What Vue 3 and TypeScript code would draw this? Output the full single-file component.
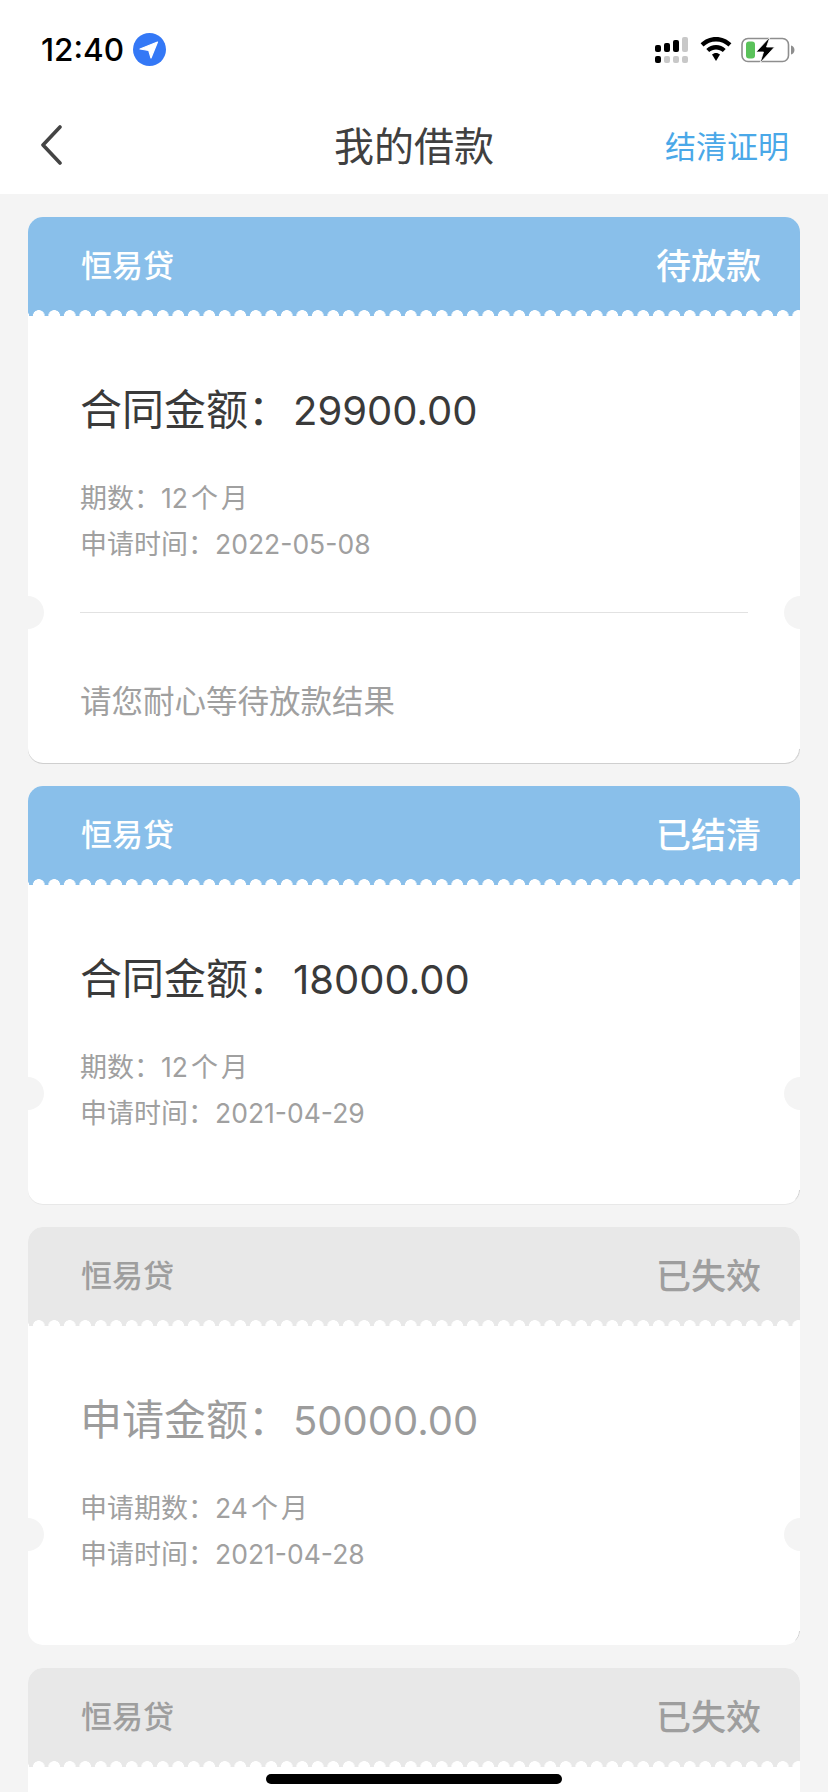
<template>
  <div class="page">
    <div class="status-bar">
      <div class="status-left">
        <span class="clock">12:40</span>
        <svg class="loc" viewBox="0 0 33 33">
          <circle cx="16.5" cy="16.5" r="16.5" fill="#3478f6" />
          <path d="M7 16 24.500 9 18 25 15.800 17.500z" fill="#fff" stroke="#fff" stroke-width="1.200" stroke-linejoin="round" />
        </svg>
      </div>
      <div class="status-right">
        <svg class="signal" width="33" height="26" viewBox="0 0 33 26">
          <rect x="0" y="8" width="6" height="7" rx="2" fill="#000" />
          <rect x="9" y="6" width="6" height="9" rx="2" fill="#000" />
          <rect x="18" y="3" width="6" height="12" rx="2" fill="#000" />
          <rect x="27" y="0" width="6" height="15" rx="2" fill="#c8c8c8" />
          <rect x="0" y="19" width="6" height="7" rx="2" fill="#000" />
          <rect x="9" y="19" width="6" height="7" rx="2" fill="#c8c8c8" />
          <rect x="18" y="19" width="6" height="7" rx="2" fill="#c8c8c8" />
          <rect x="27" y="19" width="6" height="7" rx="2" fill="#c8c8c8" />
        </svg>
        <svg class="wifi" width="32" height="24" viewBox="0 0 32 24">
          <path d="M16 0C10 0 4.700 2.400 0.600 6.300L3.500 9.500C6.800 6.300 11.200 4.400 16 4.400S25.200 6.300 28.500 9.500L31.400 6.300C27.300 2.400 22 0 16 0Z" fill="#000" />
          <path d="M16 8C12.300 8 9 9.500 6.300 12L9.200 15.100C11 13.400 13.400 12.400 16 12.400S21 13.400 22.800 15.100L25.700 12C23 9.500 19.700 8 16 8Z" fill="#000" />
          <path d="M16 16C14.500 16 13.100 16.600 12 17.600L16 24 20 17.600C18.900 16.600 17.500 16 16 16Z" fill="#000" />
        </svg>
        <svg class="battery" width="54" height="26" viewBox="0 0 54 26">
          <rect x="1" y="1.500" width="46.500" height="23" rx="6" fill="none" stroke="#8e8e8e" stroke-width="1.600" />
          <rect x="5" y="4.500" width="9" height="17" rx="3" fill="#5ac25a" />
          <path d="M50 8.500c2 .5 3.500 2.300 3.500 4.500s-1.500 4-3.500 4.500z" fill="#8e8e8e" />
          <path d="M29 0 15 15H22.500L19 26 33.500 10H25.500z" fill="#000" stroke="#fff" stroke-width=".8" />
        </svg>
      </div>
    </div>

    <div class="nav">
      <svg class="back" width="22" height="40" viewBox="0 0 22 40">
        <path d="M20 2 3 20 20 38" fill="none" stroke="#444" stroke-width="3.600" stroke-linecap="round" stroke-linejoin="round" />
      </svg>
      <div class="nav-title">我的借款</div>
      <div class="nav-action">结清证明</div>
    </div>

    <div class="list">
      <div v-for="(loan, i) in loans" :key="i" class="card" :class="{ expired: loan.expired }">
        <div class="card-head">
          <span class="brand">恒易贷</span>
          <span class="state">{{ loan.state }}</span>
        </div>
        <div v-if="loan.amount" class="card-body">
          <div class="amount">
            <span class="amount-label">{{ loan.label }}：</span><span class="amount-num">{{ loan.amount }}</span>
          </div>
          <div class="meta">
            <div class="meta-row">{{ loan.termLabel }}：<span class="num">{{ loan.term }}</span><span class="unit">个</span>月</div>
            <div class="meta-row">申请时间：<span class="num">{{ loan.date }}</span></div>
          </div>
          <template v-if="loan.note">
            <div class="divider"></div>
            <div class="note">{{ loan.note }}</div>
          </template>
        </div>
        <div v-else class="card-rest"></div>
        <template v-if="loan.amount">
          <i class="notch left"></i>
          <i class="notch right"></i>
        </template>
      </div>
    </div>

    <div class="home-bar"></div>
  </div>
</template>

<script setup lang="ts">
interface Loan {
  state: string;
  label?: string;
  amount?: string;
  termLabel?: string;
  term?: number;
  date?: string;
  note?: string;
  expired?: boolean;
}

const loans: Loan[] = [
  { state: "待放款", label: "合同金额", amount: "29900.00", termLabel: "期数", term: 12, date: "2022-05-08", note: "请您耐心等待放款结果" },
  { state: "已结清", label: "合同金额", amount: "18000.00", termLabel: "期数", term: 12, date: "2021-04-29" },
  { state: "已失效", label: "申请金额", amount: "50000.00", termLabel: "申请期数", term: 24, date: "2021-04-28", expired: true },
  // only the head of this one is on screen
  { state: "已失效", expired: true },
];
</script>

<style>
html,
body {
  margin: 0;
  background: #f4f4f4;
}
</style>

<style scoped>
.page {
  position: relative;
  width: 828px;
  height: 1792px;
  overflow: hidden;
  background: #f4f4f4;
  font-family: "Noto Sans CJK SC", sans-serif;
}

.status-bar {
  display: flex;
  justify-content: space-between;
  height: 98px;
  box-sizing: border-box;
  padding: 33px 33px 0 41px;
  background: #fff;
}

.status-left {
  display: flex;
  align-items: center;
  gap: 9px;
  height: 33px;
}

.clock {
  font-family: Inter, sans-serif;
  font-size: 31.500px;
  font-weight: 500;
  color: #000;
}

.loc {
  width: 33px;
  height: 33px;
}

.status-right {
  display: flex;
  align-items: flex-start;
  gap: 12px;
  padding-top: 4px;
}

.battery {
  margin-left: -3px;
}

.nav {
  position: relative;
  display: flex;
  align-items: center;
  justify-content: center;
  height: 96px;
  padding-bottom: 4px;
  box-sizing: border-box;
  background: #fff;
}

.back {
  position: absolute;
  left: 40px;
  top: 27px;
}

.nav-title {
  font-size: 40px;
  color: #404040;
}

.nav-action {
  position: absolute;
  right: 39px;
  top: calc(50% - 2px);
  transform: translateY(-50%);
  font-size: 31px;
  color: #4aa8e8;
}

.list {
  display: flex;
  flex-direction: column;
  gap: 23px;
  padding: 23px 28px 0;
}

.card {
  position: relative;
  flex-shrink: 0;
  overflow: hidden;
  border-radius: 15px;
  background: #fff;
  box-shadow: 0 1px 0 #e8e8e8;
}

.card:first-child {
  box-shadow: 0 1px 0 #cfcfcf;
}

.card::after {
  content: "";
  position: absolute;
  right: 0;
  bottom: 0;
  width: 14px;
  height: 14px;
  box-sizing: border-box;
  border-right: 1px solid #c8c8c8;
  border-bottom: 1px solid transparent;
  border-bottom-right-radius: 15px;
}

.card-head {
  position: relative;
  display: flex;
  align-items: center;
  justify-content: space-between;
  height: 99px;
  box-sizing: border-box;
  padding: 0 39px 6px 53px;
  background: #89bfea;
  color: #fff;
}

.card-head::after {
  content: "";
  position: absolute;
  left: 0;
  right: 0;
  bottom: 0;
  height: 6px;
  background: radial-gradient(circle at 7.750px 6px, #fff 5.600px, transparent 6.100px) 3px 0 / 15.500px 6px repeat-x;
}

.brand {
  font-size: 31px;
  font-weight: 500;
}

.state {
  font-size: 35px;
  font-weight: 500;
}

.card-body {
  padding: 69px 52px 68px;
  color: #a0a0a0;
}

.card-rest {
  height: 100px;
}

.amount {
  height: 44px;
  font-size: 42px;
  line-height: 44px;
  color: #3a3a3a;
}

.amount-num {
  margin-left: 3px;
  font-family: Inter, sans-serif;
  font-size: 40px;
}

.meta {
  margin-top: 45px;
  margin-bottom: 1px;
  font-size: 27px;
  line-height: 46px;
}

.meta-row {
  height: 46px;
}

.num {
  font-family: Inter, sans-serif;
  font-size: 26.500px;
}

.unit {
  margin: 0 3px;
}

.divider {
  height: 1px;
  margin-top: 46px;
  background: #e2e2e2;
}

.note {
  margin-top: 64px;
  margin-bottom: -26px;
  font-size: 31.500px;
  line-height: 44px;
}

.notch {
  position: absolute;
  top: 307px;
  width: 33px;
  height: 33px;
  margin-top: -16px;
  border-radius: 50%;
  background: #f4f4f4;
}

.card:first-child .notch {
  top: 395px;
}

.notch.left {
  left: -17px;
}

.notch.right {
  right: -17px;
}

.expired {
  box-shadow: none;
}

.expired .card-head {
  background: #e8e8e8;
  color: #9e9e9e;
}

.expired .amount {
  color: #9c9c9c;
}

.home-bar {
  position: absolute;
  left: 266px;
  bottom: 8px;
  width: 296px;
  height: 10px;
  border-radius: 5px;
  background: #000;
}
</style>
